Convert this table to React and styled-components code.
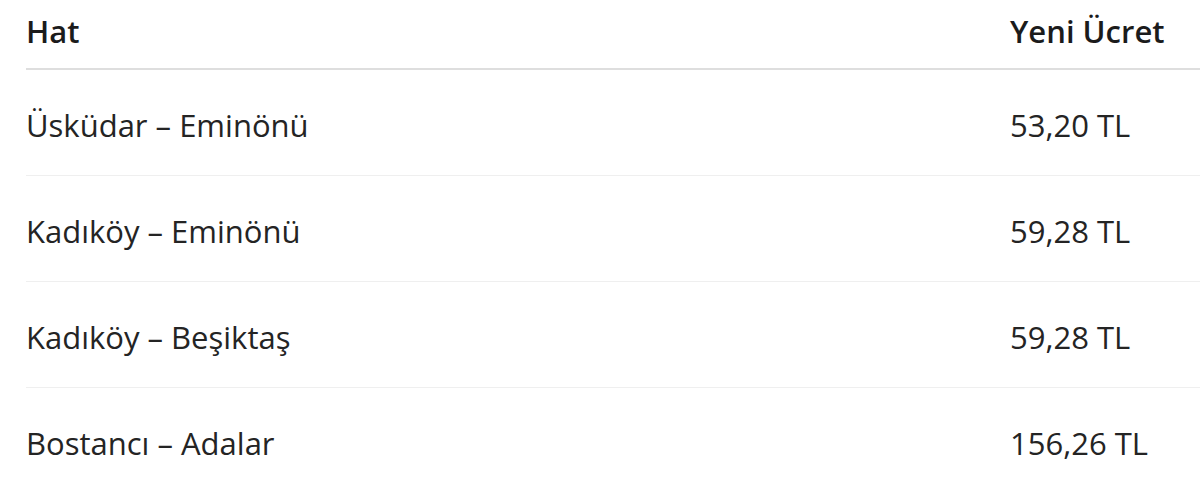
import React from "react";
import styled, { createGlobalStyle } from "styled-components";

const GlobalStyle = createGlobalStyle`
  html, body {
    margin: 0;
    padding: 0;
    background: #ffffff;
    overflow: hidden;
  }
  body {
    font-family: "Open Sans", "Noto Sans", sans-serif;
  }
`;

const Wrapper = styled.div`
  box-sizing: border-box;
  width: 1200px;
  padding-left: 26px;
`;

const Table = styled.table`
  width: 100%;
  border-collapse: collapse;
  font-size: 31px;
  color: #242424;
`;

const HeadCell = styled.th`
  height: 62px;
  padding: 0 0 6px 0;
  width: ${(props) => (props.price ? "auto" : "984px")};
  text-align: left;
  vertical-align: middle;
  font-weight: 600;
  color: #1b1b1b;
  border-bottom: 2px solid #dedede;
`;

const Cell = styled.td`
  height: 100px;
  padding: 5px 0 0 0;
  vertical-align: middle;
  border-bottom: 1px solid #efefef;
`;

const rows = [
  { line: "Üsküdar – Eminönü", fare: "53,20 TL" },
  { line: "Kadıköy – Eminönü", fare: "59,28 TL" },
  { line: "Kadıköy – Beşiktaş", fare: "59,28 TL" },
  { line: "Bostancı – Adalar", fare: "156,26 TL" },
];

const App = () => {
  return (
    <Wrapper>
      <GlobalStyle />
      <Table>
        <thead>
          <tr>
            <HeadCell>Hat</HeadCell>
            <HeadCell price>Yeni Ücret</HeadCell>
          </tr>
        </thead>
        <tbody>
          {rows.map((row) => (
            <tr key={row.line}>
              <Cell>{row.line}</Cell>
              <Cell price>{row.fare}</Cell>
            </tr>
          ))}
        </tbody>
      </Table>
    </Wrapper>
  );
};

export default App;
